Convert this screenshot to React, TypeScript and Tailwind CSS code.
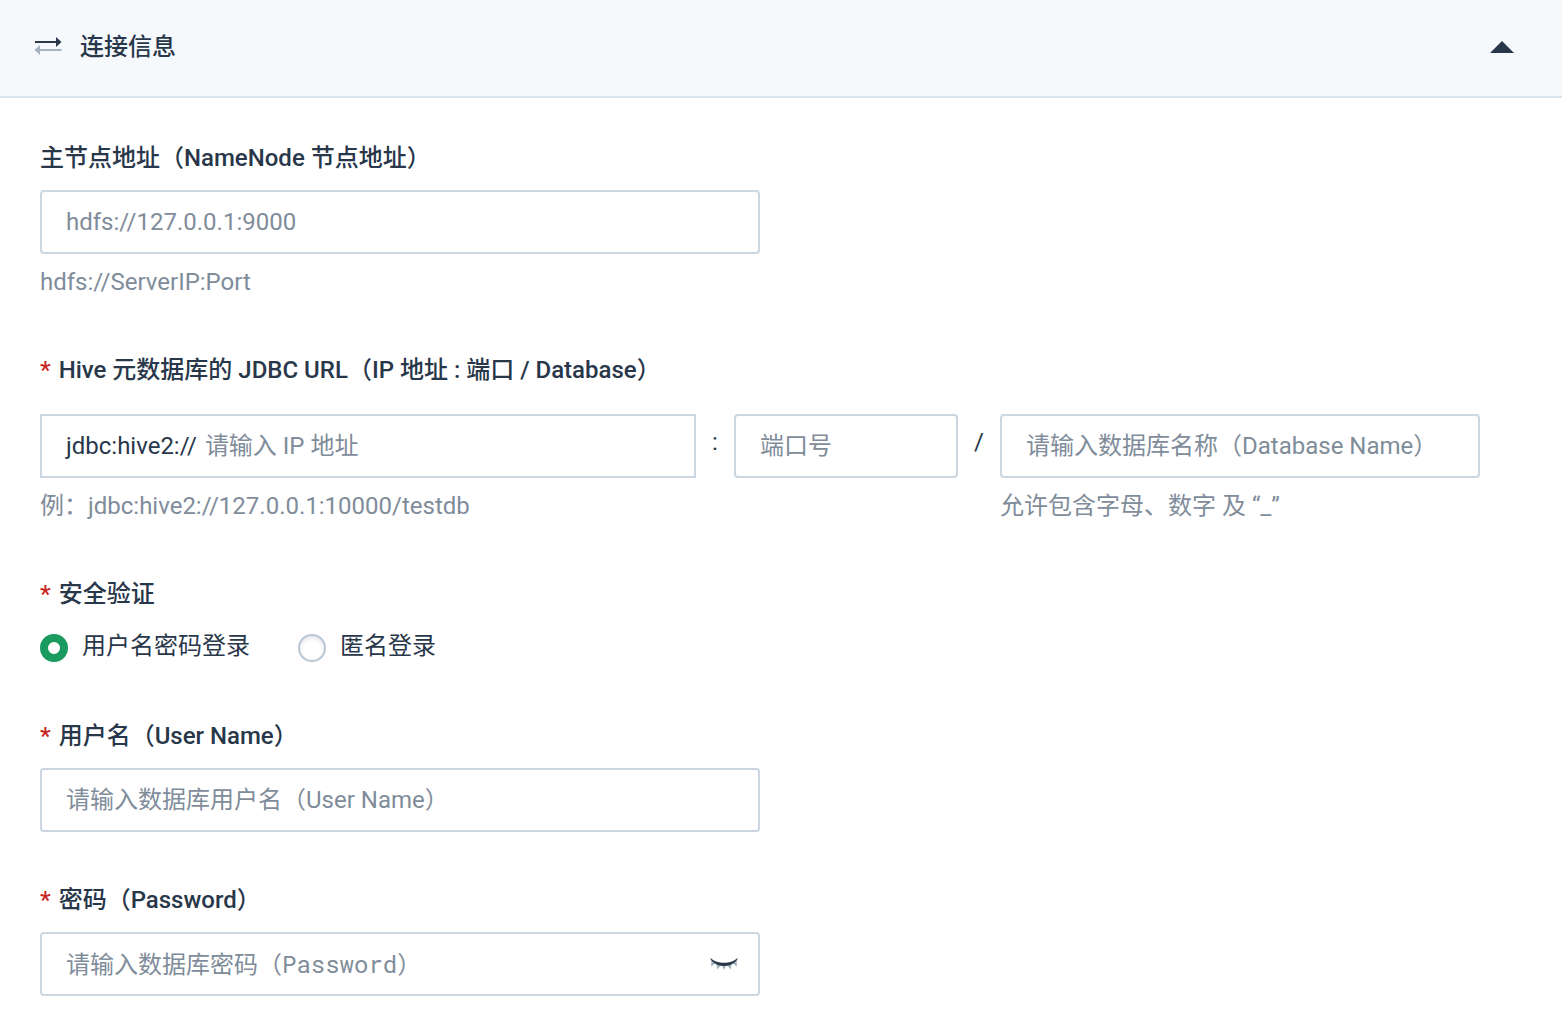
import { useState } from "react";
import type { InputHTMLAttributes, ReactNode } from "react";
import clsx from "clsx";

interface FieldLabelProps {
  htmlFor?: string;
  required?: boolean;
  children: ReactNode;
}

function FieldLabel({ htmlFor, required, children }: FieldLabelProps) {
  return (
    <label htmlFor={htmlFor} className="flex gap-2 font-medium">
      {required && <span className="text-[#ca2621]">*</span>}
      <span>{children}</span>
    </label>
  );
}

function TextInput({ className, ...props }: InputHTMLAttributes<HTMLInputElement>) {
  return (
    <input
      {...props}
      className={clsx(
        "h-16 w-full rounded border-2 border-[#ccd6e0] bg-white px-6 placeholder:text-[#7f8c9a] placeholder:opacity-100 focus:border-[#1b9a60] focus:outline-none",
        className
      )}
    />
  );
}

function Hint({ children }: { children: ReactNode }) {
  return <p className="mt-2.5 text-[#7f8c9a]">{children}</p>;
}

function LinkIcon() {
  return (
    <svg className="h-5 w-7" viewBox="0 0 28 20" fill="none">
      <path d="M1 5H23" stroke="#28374a" strokeWidth="2" />
      <path d="M22 0L27.5 5L22 10V0Z" fill="#28374a" />
      <path d="M6 13H27.5" stroke="#a5b3c0" strokeWidth="2" />
      <path d="M6 8L0.5 13L6 18V8Z" fill="#a5b3c0" />
    </svg>
  );
}

function ClosedEyeIcon() {
  return (
    <svg className="h-4 w-7" viewBox="0 0 28 16" fill="none">
      <path
        d="M1.2 5V10.5L5 7.5ZM6.5 8L7 13.5L11 9.5ZM12 9.500L14 14L16 9.500ZM17 9.500L21 13.500L21.500 8ZM23 7.500L26.800 10.500V5Z"
        fill="#a5b3c0"
      />
      <path
        d="M0.5 2C4.500 5.800 9 6.700 14 6.700C19 6.700 23.500 5.800 27.500 2C27.500 3.200 27 4.300 26 5.200C23 8.300 19 10 14 10C9 10 5 8.300 2 5.200C1 4.300 0.500 3.200 0.500 2Z"
        fill="#28374a"
      />
    </svg>
  );
}

const AUTH_TYPES = [
  { value: "password", text: "用户名密码登录" },
  { value: "anonymous", text: "匿名登录" },
];

export default function App() {
  const [open, setOpen] = useState(true);
  const [authType, setAuthType] = useState("password");
  const [showPassword, setShowPassword] = useState(false);

  return (
    <section className="min-h-screen bg-white font-[Roboto,'Noto_Sans_CJK_SC',sans-serif] text-2xl leading-9 text-[#28374a]">
      <header className="border-b-2 border-[#dae4ec] bg-[#f5f9fc]">
        <button
          type="button"
          aria-expanded={open}
          onClick={() => setOpen(!open)}
          className="flex w-full cursor-pointer items-center pt-[29px] pr-12 pb-[31px] pl-[34px]"
        >
          <LinkIcon />
          <span className="ml-[18px] font-medium">连接信息</span>
          <svg
            className={clsx("ml-auto h-3 w-6", !open && "rotate-180")}
            viewBox="0 0 24 12"
          >
            <path d="M12 0L24 12H0L12 0Z" fill="#28374a" />
          </svg>
        </button>
      </header>

      {open && (
        <form className="px-10 pt-[42px] pb-5" onSubmit={(e) => e.preventDefault()}>
          <div className="max-w-[720px]">
            <FieldLabel htmlFor="nameNode">主节点地址（NameNode 节点地址）</FieldLabel>
            <TextInput id="nameNode" className="mt-3.5" placeholder="hdfs://127.0.0.1:9000" />
            <Hint>hdfs://ServerIP:Port</Hint>
          </div>

          <div className="mt-[52px] max-w-[1440px]">
            <FieldLabel htmlFor="host" required>
              Hive 元数据库的 JDBC URL（IP 地址 : 端口 / Database）
            </FieldLabel>
            <div className="mt-[26px] grid grid-cols-[656fr_38px_224fr_42px_480fr] items-start">
              <div>
                <div className="flex h-16 items-center gap-2 border-2 border-[#ccd6e0] px-6 focus-within:border-[#1b9a60]">
                  <span>jdbc:hive2://</span>
                  <input
                    id="host"
                    placeholder="请输入 IP 地址"
                    className="min-w-0 flex-1 placeholder:text-[#7f8c9a] placeholder:opacity-100 focus:outline-none"
                  />
                </div>
                <Hint>例：jdbc:hive2://127.0.0.1:10000/testdb</Hint>
              </div>
              <span className="pt-2.5 text-center">:</span>
              <TextInput aria-label="端口号" placeholder="端口号" />
              <span className="pt-2.5 text-center">/</span>
              <div>
                <TextInput
                  aria-label="数据库名称"
                  placeholder="请输入数据库名称（Database Name）"
                />
                <Hint>允许包含字母、数字 及 “_”</Hint>
              </div>
            </div>
          </div>

          <fieldset className="mt-[52px]">
            <legend className="flex gap-2 font-medium">
              <span className="text-[#ca2621]">*</span>
              <span>安全验证</span>
            </legend>
            <div className="mt-4 flex gap-12">
              {AUTH_TYPES.map((item) => (
                <label key={item.value} className="flex cursor-pointer items-center gap-3.5">
                  <input
                    type="radio"
                    name="authType"
                    value={item.value}
                    checked={authType === item.value}
                    onChange={() => setAuthType(item.value)}
                    className="mt-1 size-7 cursor-pointer appearance-none rounded-full border-2 border-[#b9c7d5] bg-white shadow-[inset_0_2px_4px_rgba(40,55,74,0.12)] checked:border-8 checked:border-[#1b9a60] checked:shadow-none"
                  />
                  <span>{item.text}</span>
                </label>
              ))}
            </div>
          </fieldset>

          <div className="mt-[54px] max-w-[720px]">
            <FieldLabel htmlFor="userName" required>
              用户名（User Name）
            </FieldLabel>
            <TextInput
              id="userName"
              className="mt-3.5"
              placeholder="请输入数据库用户名（User Name）"
            />
          </div>

          <div className="mt-[50px] max-w-[720px]">
            <FieldLabel htmlFor="password" required>
              密码（Password）
            </FieldLabel>
            <div className="relative mt-3.5">
              <TextInput
                id="password"
                type={showPassword ? "text" : "password"}
                className="pr-16 font-['Roboto_Mono','Liberation_Mono','Noto_Sans_CJK_SC',monospace]"
                placeholder="请输入数据库密码（Password）"
              />
              <button
                type="button"
                aria-label="显示密码"
                onClick={() => setShowPassword(!showPassword)}
                className="absolute inset-y-0 right-[22px] flex cursor-pointer items-center"
              >
                <ClosedEyeIcon />
              </button>
            </div>
          </div>
        </form>
      )}
    </section>
  );
}
